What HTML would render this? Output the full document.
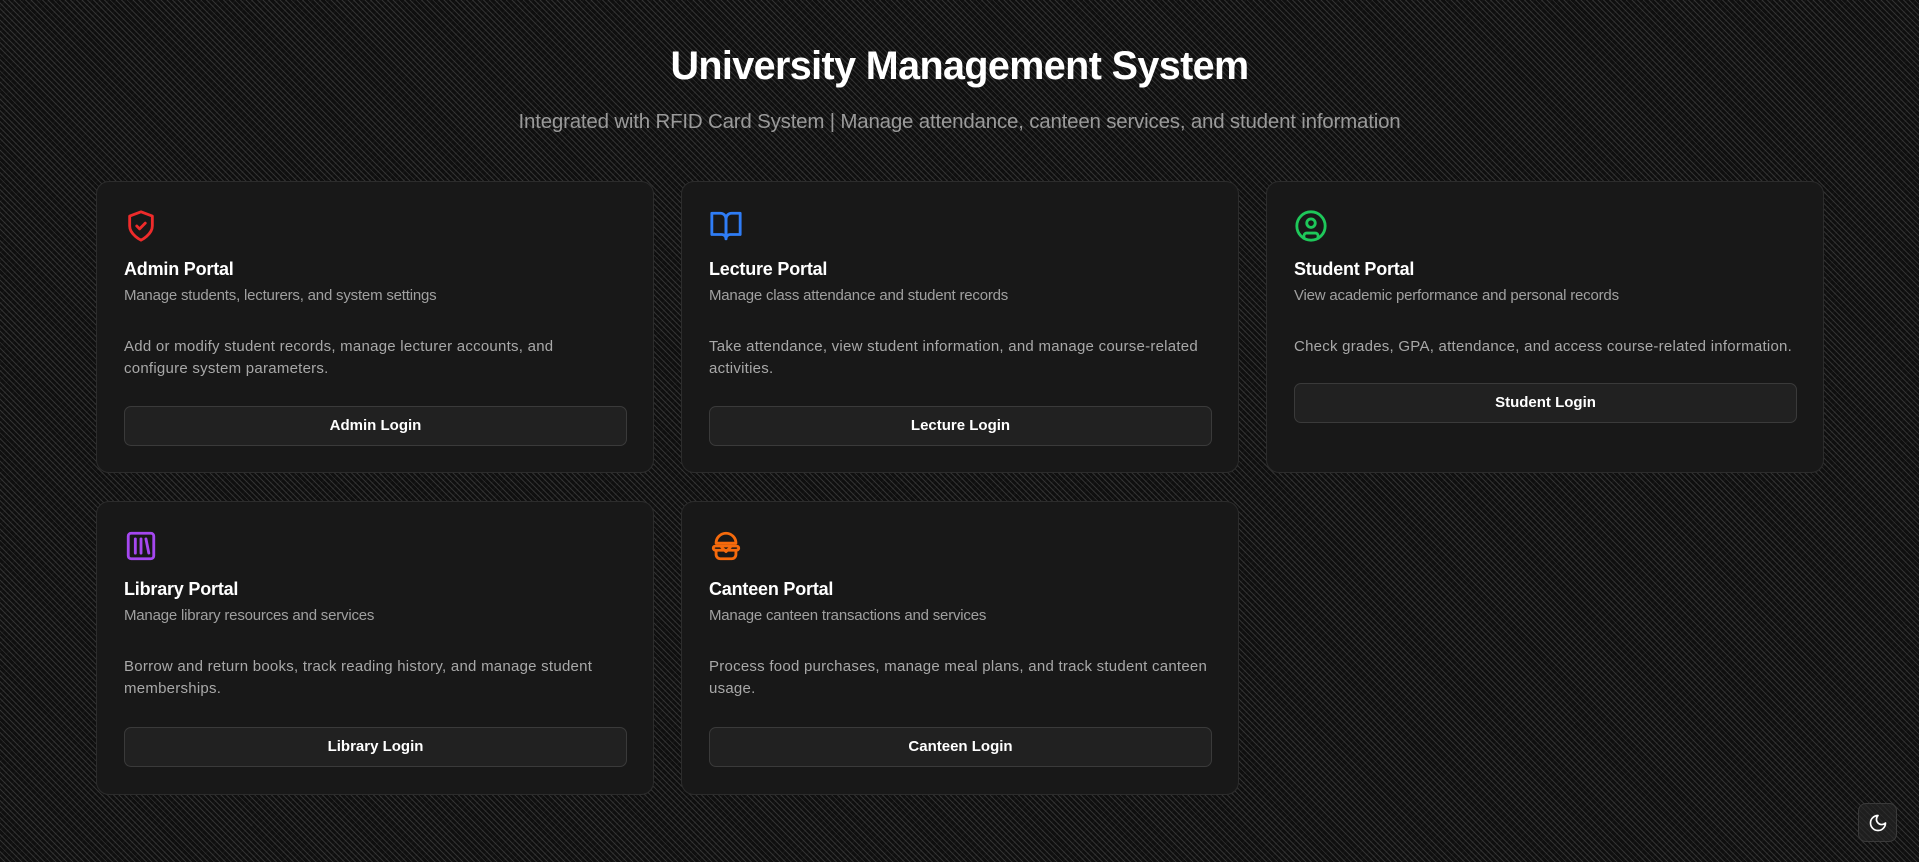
<!DOCTYPE html>
<html><head><meta charset="utf-8"><style>
*{box-sizing:border-box;margin:0;padding:0}
html,body{width:1919px;height:862px;overflow:hidden}
body{font-family:"Liberation Sans",sans-serif;color:#fff;position:relative;
background-color:#0f0f0f;
background-image:repeating-linear-gradient(45deg,transparent 0 3px,rgba(100,100,100,.4) 3px 4px),
repeating-linear-gradient(-45deg,transparent 0 5px,rgba(60,60,60,.15) 5px 6px);}
h1{position:absolute;top:44px;left:0;width:100%;text-align:center;font-size:39.5px;font-weight:bold;letter-spacing:-0.6px}
.sub{position:absolute;top:110px;left:0;width:100%;text-align:center;font-size:20.5px;color:#9a9a9a;letter-spacing:-0.2px}
.card{position:absolute;width:558px;background:#181818;border:1px solid #2c2c2c;border-radius:13px}
.card svg.ic{position:absolute;left:27px;top:27px;width:34px;height:34px}
.card h2{position:absolute;left:27px;top:77px;font-size:18px;font-weight:bold;letter-spacing:-0.2px}
.card .d{position:absolute;left:27px;top:105px;font-size:15px;color:#a0a0a0;letter-spacing:-0.2px}
.card .b{position:absolute;left:27px;top:154px;white-space:nowrap;font-size:15px;line-height:22px;color:#a8a8a8;letter-spacing:0.25px}
.card .btn{position:absolute;left:27px;width:503px;height:40px;background:#212121;border:1px solid #3a3a3a;border-radius:7px;text-align:center;line-height:38px;font-size:15px;font-weight:bold}
.theme{position:absolute;left:1858px;top:803px;width:39px;height:39px;border:1px solid #3a3a3a;border-radius:8px;background:rgba(40,40,40,.6)}
</style></head><body>
<h1>University Management System</h1>
<div class="sub">Integrated with RFID Card System | Manage attendance, canteen services, and student information</div>

<div class="card" style="left:96px;top:181px;height:292px">
<svg class="ic" viewBox="0 0 24 24" fill="none" stroke="#ef2b2b" stroke-width="2" stroke-linecap="round" stroke-linejoin="round"><path d="M12 22s8-4 8-10V5l-8-3-8 3v7c0 6 8 10 8 10z"/><path d="m9 12 2 2 4-4"/></svg>
<h2>Admin Portal</h2><div class="d">Manage students, lecturers, and system settings</div>
<div class="b">Add or modify student records, manage lecturer accounts, and<br>configure system parameters.</div>
<div class="btn" style="top:224px">Admin Login</div></div>

<div class="card" style="left:681px;top:181px;height:292px">
<svg class="ic" viewBox="0 0 24 24" fill="none" stroke="#2f7df6" stroke-width="2" stroke-linecap="round" stroke-linejoin="round"><path d="M2 3h6a4 4 0 0 1 4 4v14a3 3 0 0 0-3-3H2z"/><path d="M22 3h-6a4 4 0 0 0-4 4v14a3 3 0 0 1 3-3h7z"/></svg>
<h2>Lecture Portal</h2><div class="d">Manage class attendance and student records</div>
<div class="b">Take attendance, view student information, and manage course-related<br>activities.</div>
<div class="btn" style="top:224px">Lecture Login</div></div>

<div class="card" style="left:1266px;top:181px;height:292px">
<svg class="ic" viewBox="0 0 24 24" fill="none" stroke="#1ec85a" stroke-width="2" stroke-linecap="round" stroke-linejoin="round"><circle cx="12" cy="12" r="10"/><circle cx="12" cy="10" r="3"/><path d="M7 20.662V19a2 2 0 0 1 2-2h6a2 2 0 0 1 2 2v1.662"/></svg>
<h2>Student Portal</h2><div class="d">View academic performance and personal records</div>
<div class="b">Check grades, GPA, attendance, and access course-related information.</div>
<div class="btn" style="top:201px">Student Login</div></div>

<div class="card" style="left:96px;top:501px;height:294px">
<svg class="ic" viewBox="0 0 24 24" fill="none" stroke="#a547f0" stroke-width="2" stroke-linecap="round" stroke-linejoin="round"><rect x="3" y="3" width="18" height="18" rx="2"/><path d="M8 7v10M12 7v10M15.5 7l2 10"/></svg>
<h2>Library Portal</h2><div class="d">Manage library resources and services</div>
<div class="b">Borrow and return books, track reading history, and manage student<br>memberships.</div>
<div class="btn" style="top:225px">Library Login</div></div>

<div class="card" style="left:681px;top:501px;height:294px">
<svg class="ic" viewBox="0 0 24 24" fill="none" stroke="#f56a0c" stroke-width="2" stroke-linecap="round" stroke-linejoin="round"><path d="M5 10a7 7 0 0 1 14 0z"/><path d="M3 13.5c0-1 .8-1.5 2-1.5h14c1.2 0 2 .5 2 1.5s-.8 1.5-2 1.5H5c-1.2 0-2-.5-2-1.5z"/><path d="m9 13 3 3 3-3"/><path d="M5 16v2a3 3 0 0 0 3 3h8a3 3 0 0 0 3-3v-2"/></svg>
<h2>Canteen Portal</h2><div class="d">Manage canteen transactions and services</div>
<div class="b">Process food purchases, manage meal plans, and track student canteen<br>usage.</div>
<div class="btn" style="top:225px">Canteen Login</div></div>

<div class="theme"><svg width="20" height="20" viewBox="0 0 24 24" style="position:absolute;left:9px;top:9px" fill="none" stroke="#fff" stroke-width="2" stroke-linecap="round" stroke-linejoin="round"><path d="M12 3a6 6 0 0 0 9 9 9 9 0 1 1-9-9z"/></svg></div>
</body></html>
